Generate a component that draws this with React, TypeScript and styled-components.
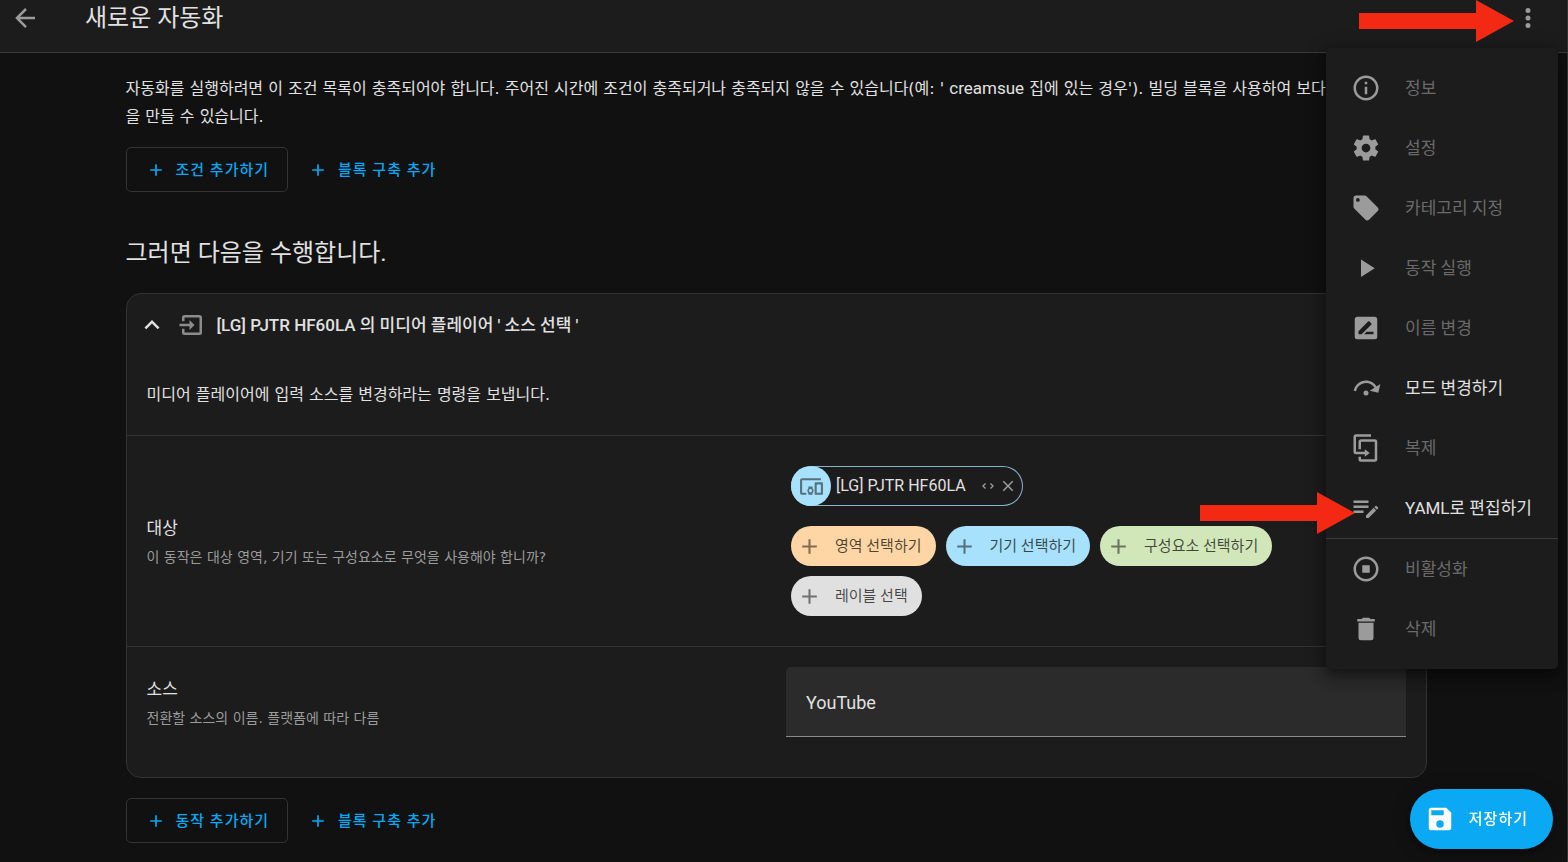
import React from "react";
import styled, { createGlobalStyle } from "styled-components";

const ICONS = {
  arrowLeft:
    "M20,11V13H8L13.5,18.5L12.08,19.92L4.16,12L12.08,4.08L13.5,5.5L8,11H20Z",
  dots: "M12,16A2,2 0 0,1 14,18A2,2 0 0,1 12,20A2,2 0 0,1 10,18A2,2 0 0,1 12,16M12,10A2,2 0 0,1 14,12A2,2 0 0,1 12,14A2,2 0 0,1 10,12A2,2 0 0,1 12,10M12,4A2,2 0 0,1 14,6A2,2 0 0,1 12,8A2,2 0 0,1 10,6A2,2 0 0,1 12,4Z",
  info: "M11,9H13V7H11M12,20C7.59,20 4,16.41 4,12C4,7.59 7.59,4 12,4C16.41,4 20,7.59 20,12C20,16.41 16.41,20 12,20M12,2A10,10 0 0,0 2,12A10,10 0 0,0 12,22A10,10 0 0,0 22,12A10,10 0 0,0 12,2M11,17H13V11H11V17Z",
  cog: "M12,15.5A3.5,3.5 0 0,1 8.5,12A3.5,3.5 0 0,1 12,8.5A3.5,3.5 0 0,1 15.5,12A3.5,3.5 0 0,1 12,15.5M19.43,12.97C19.47,12.65 19.5,12.33 19.5,12C19.5,11.67 19.47,11.34 19.43,11L21.54,9.37C21.73,9.22 21.78,8.95 21.66,8.73L19.66,5.27C19.54,5.05 19.27,4.96 19.05,5.05L16.56,6.05C16.04,5.66 15.5,5.32 14.87,5.07L14.5,2.42C14.46,2.18 14.25,2 14,2H10C9.75,2 9.54,2.18 9.5,2.42L9.13,5.07C8.5,5.32 7.96,5.66 7.44,6.05L4.95,5.05C4.73,4.96 4.46,5.05 4.34,5.27L2.34,8.73C2.21,8.95 2.27,9.22 2.46,9.37L4.57,11C4.53,11.34 4.5,11.67 4.5,12C4.5,12.33 4.53,12.65 4.57,12.97L2.46,14.63C2.27,14.78 2.21,15.05 2.34,15.27L4.34,18.73C4.46,18.95 4.73,19.03 4.95,18.95L7.44,17.94C7.96,18.34 8.5,18.68 9.13,18.93L9.5,21.58C9.54,21.82 9.75,22 10,22H14C14.25,22 14.46,21.82 14.5,21.58L14.87,18.93C15.5,18.67 16.04,18.34 16.56,17.94L19.05,18.95C19.27,19.03 19.54,18.95 19.66,18.73L21.66,15.27C21.78,15.05 21.73,14.78 21.54,14.63L19.43,12.97Z",
  tag: "M5.5,7A1.5,1.5 0 0,1 4,5.5A1.5,1.5 0 0,1 5.5,4A1.5,1.5 0 0,1 7,5.5A1.5,1.5 0 0,1 5.5,7M21.41,11.58L12.41,2.58C12.05,2.22 11.55,2 11,2H4C2.89,2 2,2.89 2,4V11C2,11.55 2.22,12.05 2.59,12.41L11.58,21.41C11.95,21.77 12.45,22 13,22C13.55,22 14.05,21.77 14.41,21.41L21.41,14.41C21.78,14.05 22,13.55 22,13C22,12.44 21.77,11.94 21.41,11.58Z",
  play: "M8,5.14V19.14L19,12.14L8,5.14Z",
  rename:
    "M18,17H10.5L12.5,15H18M6,17V14.5L13.88,6.65C14.07,6.45 14.39,6.45 14.59,6.65L16.35,8.41C16.55,8.61 16.55,8.92 16.35,9.12L8.47,17M19,3H5C3.89,3 3,3.89 3,5V19A2,2 0 0,0 5,21H19A2,2 0 0,0 21,19V5C21,3.89 20.1,3 19,3Z",
  stepOver:
    "M12,14A2,2 0 0,1 14,16A2,2 0 0,1 12,18A2,2 0 0,1 10,16A2,2 0 0,1 12,14M23.46,8.86L21.87,15.75L15,14.16L18.8,11.78C17.39,9.5 14.87,8 12,8C8.05,8 4.77,10.86 4.12,14.63L2.15,14.28C2.96,9.58 7.06,6 12,6C15.58,6 18.73,7.89 20.5,10.72L23.46,8.86Z",
  duplicate:
    "M11,17H4A2,2 0 0,1 2,15V3A2,2 0 0,1 4,1H16V3H4V15H11V13L15,16L11,19V17M19,21V7H8V13H6V7A2,2 0 0,1 8,5H19A2,2 0 0,1 21,7V21A2,2 0 0,1 19,23H8A2,2 0 0,1 6,21V19H8V21H19Z",
  playlistEdit:
    "M2,6V8H14V6H2M2,10V12H14V10H2M20.04,10.13C19.9,10.13 19.76,10.19 19.65,10.3L18.65,11.3L20.7,13.35L21.7,12.35C21.92,12.14 21.92,11.79 21.7,11.58L20.42,10.3C20.31,10.19 20.18,10.13 20.04,10.13M18.07,11.88L12,17.94V20H14.06L20.12,13.93L18.07,11.88M2,14V16H10V14H2Z",
  stop: "M12,2A10,10 0 0,0 2,12A10,10 0 0,0 12,22A10,10 0 0,0 22,12A10,10 0 0,0 12,2M12,4C16.41,4 20,7.59 20,12C20,16.41 16.41,20 12,20C7.59,20 4,16.41 4,12C4,7.59 7.59,4 12,4M9,9V15H15V9",
  trash:
    "M19,4H15.5L14.5,3H9.5L8.5,4H5V6H19M6,19A2,2 0 0,0 8,21H16A2,2 0 0,0 18,19V7H6V19Z",
  plus: "M19,13H13V19H11V13H5V11H11V5H13V11H19V13Z",
  chevronUp:
    "M7.41,15.41L12,10.83L16.59,15.41L18,14L12,8L6,14L7.41,15.41Z",
  importIn:
    "M14,12L10,8V11H2V13H10V16M20,18V6C20,4.89 19.1,4 18,4H6A2,2 0 0,0 4,6V9H6V6H18V18H6V15H4V18A2,2 0 0,0 6,20H18A2,2 0 0,0 20,18Z",
  devices:
    "M3 6H21V4H3C1.9 4 1 4.9 1 6V18C1 19.1 1.9 20 3 20H7V18H3V6M13 12H9V13.78C8.39 14.33 8 15.11 8 16C8 16.89 8.39 17.67 9 18.22V20H13V18.22C13.61 17.67 14 16.88 14 16S13.61 14.33 13 13.78V12M11 17.5C10.17 17.5 9.5 16.83 9.5 16S10.17 14.5 11 14.5 12.5 15.17 12.5 16 11.83 17.5 11 17.5M22 8H16C15.5 8 15 8.5 15 9V19C15 19.5 15.5 20 16 20H22C22.5 20 23 19.5 23 19V9C23 8.5 22.5 8 22 8M21 18H17V10H21V18Z",
  unfold:
    "M18.17,12L15,8.83L16.41,7.41L21,12L16.41,16.58L15,15.17L18.17,12M5.83,12L9,15.17L7.59,16.59L3,12L7.59,7.42L9,8.83L5.83,12Z",
  close:
    "M19,6.41L17.59,5L12,10.59L6.41,5L5,6.41L10.59,12L5,17.59L6.41,19L12,13.41L17.59,19L19,17.59L13.41,12L19,6.41Z",
  save: "M15,9H5V5H15M12,19A3,3 0 0,1 9,16A3,3 0 0,1 12,13A3,3 0 0,1 15,16A3,3 0 0,1 12,19M17,3H5C3.89,3 3,3.9 3,5V19A2,2 0 0,0 5,21H19A2,2 0 0,0 21,19V7L17,3Z",
};

type IconName = keyof typeof ICONS;

const Svg = styled.svg`
  display: block;
  flex: none;
  fill: currentColor;
`;

function Icon({ name, size = 30 }: { name: IconName; size?: number }) {
  return (
    <Svg width={size} height={size} viewBox="0 0 24 24" aria-hidden="true">
      <path d={ICONS[name]} />
    </Svg>
  );
}

const GlobalStyle = createGlobalStyle`
  * { box-sizing: border-box; }
  body {
    margin: 0;
    background: #111111;
    color: #e1e1e1;
    font-family: Roboto, "Noto Sans CJK KR", sans-serif;
    font-size: 17px;
    line-height: 28px;
  }
  button, input { font: inherit; color: inherit; }
  button { cursor: pointer; }
  h1, h2, h3, p, ul { margin: 0; padding: 0; font-weight: 400; }
`;

const Page = styled.div`
  position: relative;
  min-height: 100vh;
  border-right: 1px solid #333333;
  overflow: hidden;
`;

const TopBar = styled.header`
  display: flex;
  align-items: center;
  height: 53px;
  padding: 0 24px 17px 10px;
  background: #1c1c1c;
  border-bottom: 1px solid #3a3a3a;
`;

const IconButton = styled.button<{ $bright?: boolean }>`
  display: flex;
  align-items: center;
  justify-content: center;
  padding: 0;
  border: 0;
  background: none;
  color: ${(p) => (p.$bright ? "#e1e1e1" : "#9b9b9b")};
`;

const Title = styled.h1`
  flex: 1;
  margin-left: 45px;
  font-size: 24px;
  line-height: 34px;
`;

const Content = styled.main`
  max-width: 1301px;
  margin: 0 auto;
  padding: 21px 0 19px;
`;

const Shell = styled.div`
  padding: 0 15px 0 0;
`;

const ButtonRow = styled.div`
  display: flex;
  align-items: center;
  gap: 10px;
`;

const AddButton = styled.button<{ $outlined?: boolean }>`
  display: flex;
  align-items: center;
  gap: 10px;
  height: 45px;
  padding: ${(p) => (p.$outlined ? "0 18px 0 19px" : "0 10px")};
  border: ${(p) => (p.$outlined ? "1px solid #333333" : "0")};
  border-radius: 5px;
  background: none;
  color: #03a9f4;
  font-size: 15px;
  font-weight: 500;
  letter-spacing: 1px;
`;

const Prose = styled.p`
  font-family: "DejaVu Sans", "Noto Sans CJK KR", sans-serif;
  font-size: 16px;
`;

const PersonName = styled.span`
  font-family: Roboto, sans-serif;
  font-size: 17px;
`;

const Intro = styled(Prose)`
  margin-bottom: 16px;
  white-space: nowrap;
`;

const SectionTitle = styled.h2`
  margin: 43px 0 22px;
  font-size: 24px;
  line-height: 36px;
`;

const Card = styled.section`
  margin-bottom: 20px;
  padding-bottom: 20px;
  border: 1px solid #333333;
  border-radius: 15px;
  background: #1c1c1c;
`;

const CardHeader = styled.div`
  display: flex;
  align-items: center;
  height: 61px;
  padding-left: 10px;
`;

const ActionIcon = styled.span`
  margin: 0 10px;
  color: #8c8c8c;
`;

const CardTitle = styled.h3`
  font-size: 17px;
  font-weight: 500;
`;

const CardText = styled(Prose)`
  padding: 26px 20px;
`;

const SettingRow = styled.div<{ $spacing: number }>`
  display: grid;
  grid-template-columns: 1fr 1fr;
  align-items: center;
  padding: ${(p) => p.$spacing}px 0;
  border-top: 1px solid #333333;
`;

const SettingInfo = styled.div`
  padding: 4px 10px 0 20px;
`;

const SettingName = styled.label`
  display: block;
`;

const SettingHint = styled(Prose)`
  color: #9b9b9b;
  font-size: 14px;
  line-height: 30px;
`;

const SettingControl = styled.div`
  padding: 0 20px 0 10px;
`;

const ChipArea = styled.div`
  padding: 0 5px;
`;

const ChipRow = styled.div`
  display: flex;
  flex-wrap: wrap;
  gap: 10px;
`;

const DeviceChip = styled.div`
  display: flex;
  align-items: center;
  width: max-content;
  height: 40px;
  margin-bottom: 20px;
  padding-right: 6px;
  border-radius: 20px;
  box-shadow: inset 0 0 0 1px #86b4c8;
  font-size: 16px;
`;

const ChipBadge = styled.span`
  display: flex;
  align-items: center;
  justify-content: center;
  width: 40px;
  height: 40px;
  margin-right: 5px;
  border-radius: 50%;
  background: #a8e1fb;
  color: #54717e;
`;

const ChipActions = styled.span`
  display: flex;
  align-items: center;
  gap: 3px;
  margin-left: 14px;
`;

const ChoiceChip = styled.button<{ $tone: string }>`
  display: flex;
  align-items: center;
  gap: 13px;
  height: 40px;
  padding: 0 14px 0 6px;
  border: 0;
  border-radius: 20px;
  background: ${(p) => p.$tone};
  color: rgba(0, 0, 0, 0.7);
  font-size: 15px;

  svg { opacity: 0.7; }
`;

const TextBox = styled.input`
  display: block;
  width: 100%;
  height: 70px;
  padding: 2px 20px 0;
  border: 0;
  border-bottom: 1px solid #8a8a8a;
  border-radius: 5px 5px 0 0;
  background: #2b2b2b;
  font-size: 18px;
`;

const Menu = styled.ul`
  position: absolute;
  top: 48px;
  right: 9px;
  width: 232px;
  padding: 10px 0;
  border-radius: 5px;
  background: #1c1c1c;
  box-shadow: 0 6px 6px -3px rgba(0, 0, 0, 0.2), 0 10px 13px 1px rgba(0, 0, 0, 0.14),
    0 4px 18px 3px rgba(0, 0, 0, 0.3);
  list-style: none;
`;

const MenuDivider = styled.li`
  height: 1px;
  background: #3a3a3a;
`;

const MenuItem = styled.button`
  display: flex;
  align-items: center;
  gap: 24px;
  width: 100%;
  height: 60px;
  padding: 0 25px;
  border: 0;
  background: none;
  font-size: 17px;
  text-align: left;
  white-space: nowrap;

  svg { color: #9b9b9b; }
  &:disabled { color: #6a6a6a; }
`;

const SaveButton = styled.button`
  position: fixed;
  right: 15px;
  bottom: 13px;
  display: flex;
  align-items: center;
  gap: 14px;
  height: 60px;
  padding: 0 25px 0 15px;
  border: 0;
  border-radius: 30px;
  background: #0ba9f4;
  color: #ffffff;
  font-size: 15px;
  font-weight: 500;
  letter-spacing: 1px;
  box-shadow: 0 4px 6px rgba(0, 0, 0, 0.3), 0 1px 18px rgba(0, 0, 0, 0.25);
`;

const Pointer = styled.svg<{ $top: number; $right: number }>`
  position: absolute;
  top: ${(p) => p.$top}px;
  right: ${(p) => p.$right}px;
  fill: #f42914;
`;

function RedArrow({ top, right }: { top: number; right: number }) {
  return (
    <Pointer $top={top} $right={right} width="155" height="42" viewBox="0 0 155 42" aria-hidden="true">
      <path d="M0 13H117V0L155 21L117 42V29H0Z" />
    </Pointer>
  );
}

type Entry = { icon: IconName; text: string; enabled?: boolean };

const MAIN_ENTRIES: Entry[] = [
  { icon: "info", text: "정보" },
  { icon: "cog", text: "설정" },
  { icon: "tag", text: "카테고리 지정" },
  { icon: "play", text: "동작 실행" },
  { icon: "rename", text: "이름 변경" },
  { icon: "stepOver", text: "모드 변경하기", enabled: true },
  { icon: "duplicate", text: "복제" },
  { icon: "playlistEdit", text: "YAML로 편집하기", enabled: true },
];

const DANGER_ENTRIES: Entry[] = [
  { icon: "stop", text: "비활성화" },
  { icon: "trash", text: "삭제" },
];

const CHOICES = [
  { text: "영역 선택하기", tone: "#fed6a5" },
  { text: "기기 선택하기", tone: "#a8e1fb" },
  { text: "구성요소 선택하기", tone: "#d2e7b9" },
  { text: "레이블 선택", tone: "#e0e0e0" },
];

function MenuEntries({ entries }: { entries: Entry[] }) {
  return (
    <>
      {entries.map((e) => (
        <li key={e.text} role="none">
          <MenuItem type="button" role="menuitem" disabled={!e.enabled}>
            <Icon name={e.icon} />
            {e.text}
          </MenuItem>
        </li>
      ))}
    </>
  );
}

function AddButtons({ label }: { label: string }) {
  return (
    <ButtonRow>
      <AddButton type="button" $outlined>
        <Icon name="plus" size={20} />
        {label}
      </AddButton>
      <AddButton type="button">
        <Icon name="plus" size={20} />
        블록 구축 추가
      </AddButton>
    </ButtonRow>
  );
}

export default function App() {
  return (
    <Page>
      <GlobalStyle />
      <TopBar>
        <IconButton type="button" aria-label="뒤로">
          <Icon name="arrowLeft" />
        </IconButton>
        <Title>새로운 자동화</Title>
        <IconButton type="button" aria-label="메뉴" aria-haspopup="menu" aria-expanded="true">
          <Icon name="dots" />
        </IconButton>
      </TopBar>

      <Shell>
        <Content>
          <Intro>
            자동화를 실행하려면 이 조건 목록이 충족되어야 합니다. 주어진 시간에 조건이 충족되거나
            충족되지 않을 수 있습니다(예: ' <PersonName>creamsue</PersonName> 집에 있는 경우'). 빌딩
            블록을 사용하여 보다
            <br />을 만들 수 있습니다.
          </Intro>
          <AddButtons label="조건 추가하기" />

          <SectionTitle>그러면 다음을 수행합니다.</SectionTitle>
          <Card>
            <CardHeader>
              <IconButton type="button" aria-label="접기" $bright>
                <Icon name="chevronUp" />
              </IconButton>
              <ActionIcon>
                <Icon name="importIn" />
              </ActionIcon>
              <CardTitle>[LG] PJTR HF60LA 의 미디어 플레이어 ' 소스 선택 '</CardTitle>
            </CardHeader>
            <CardText>미디어 플레이어에 입력 소스를 변경하라는 명령을 보냅니다.</CardText>

            <SettingRow $spacing={30}>
              <SettingInfo>
                <SettingName as="p">대상</SettingName>
                <SettingHint>이 동작은 대상 영역, 기기 또는 구성요소로 무엇을 사용해야 합니까?</SettingHint>
              </SettingInfo>
              <SettingControl>
                <ChipArea>
                  <DeviceChip>
                    <ChipBadge>
                      <Icon name="devices" size={25} />
                    </ChipBadge>
                    [LG] PJTR HF60LA
                    <ChipActions>
                      <IconButton type="button" aria-label="펼치기">
                        <Icon name="unfold" size={16} />
                      </IconButton>
                      <IconButton type="button" aria-label="제거">
                        <Icon name="close" size={18} />
                      </IconButton>
                    </ChipActions>
                  </DeviceChip>
                  <ChipRow>
                    {CHOICES.map((c) => (
                      <ChoiceChip key={c.text} type="button" $tone={c.tone}>
                        <Icon name="plus" size={25} />
                        {c.text}
                      </ChoiceChip>
                    ))}
                  </ChipRow>
                </ChipArea>
              </SettingControl>
            </SettingRow>

            <SettingRow $spacing={20}>
              <SettingInfo>
                <SettingName htmlFor="source">소스</SettingName>
                <SettingHint>전환할 소스의 이름. 플랫폼에 따라 다름</SettingHint>
              </SettingInfo>
              <SettingControl>
                <TextBox id="source" type="text" defaultValue="YouTube" />
              </SettingControl>
            </SettingRow>
          </Card>
          <AddButtons label="동작 추가하기" />
        </Content>
      </Shell>

      <Menu role="menu">
        <MenuEntries entries={MAIN_ENTRIES} />
        <MenuDivider role="separator" />
        <MenuEntries entries={DANGER_ENTRIES} />
      </Menu>

      <SaveButton type="button">
        <Icon name="save" />
        저장하기
      </SaveButton>

      <RedArrow top={0} right={53} />
      <RedArrow top={492} right={212} />
    </Page>
  );
}
